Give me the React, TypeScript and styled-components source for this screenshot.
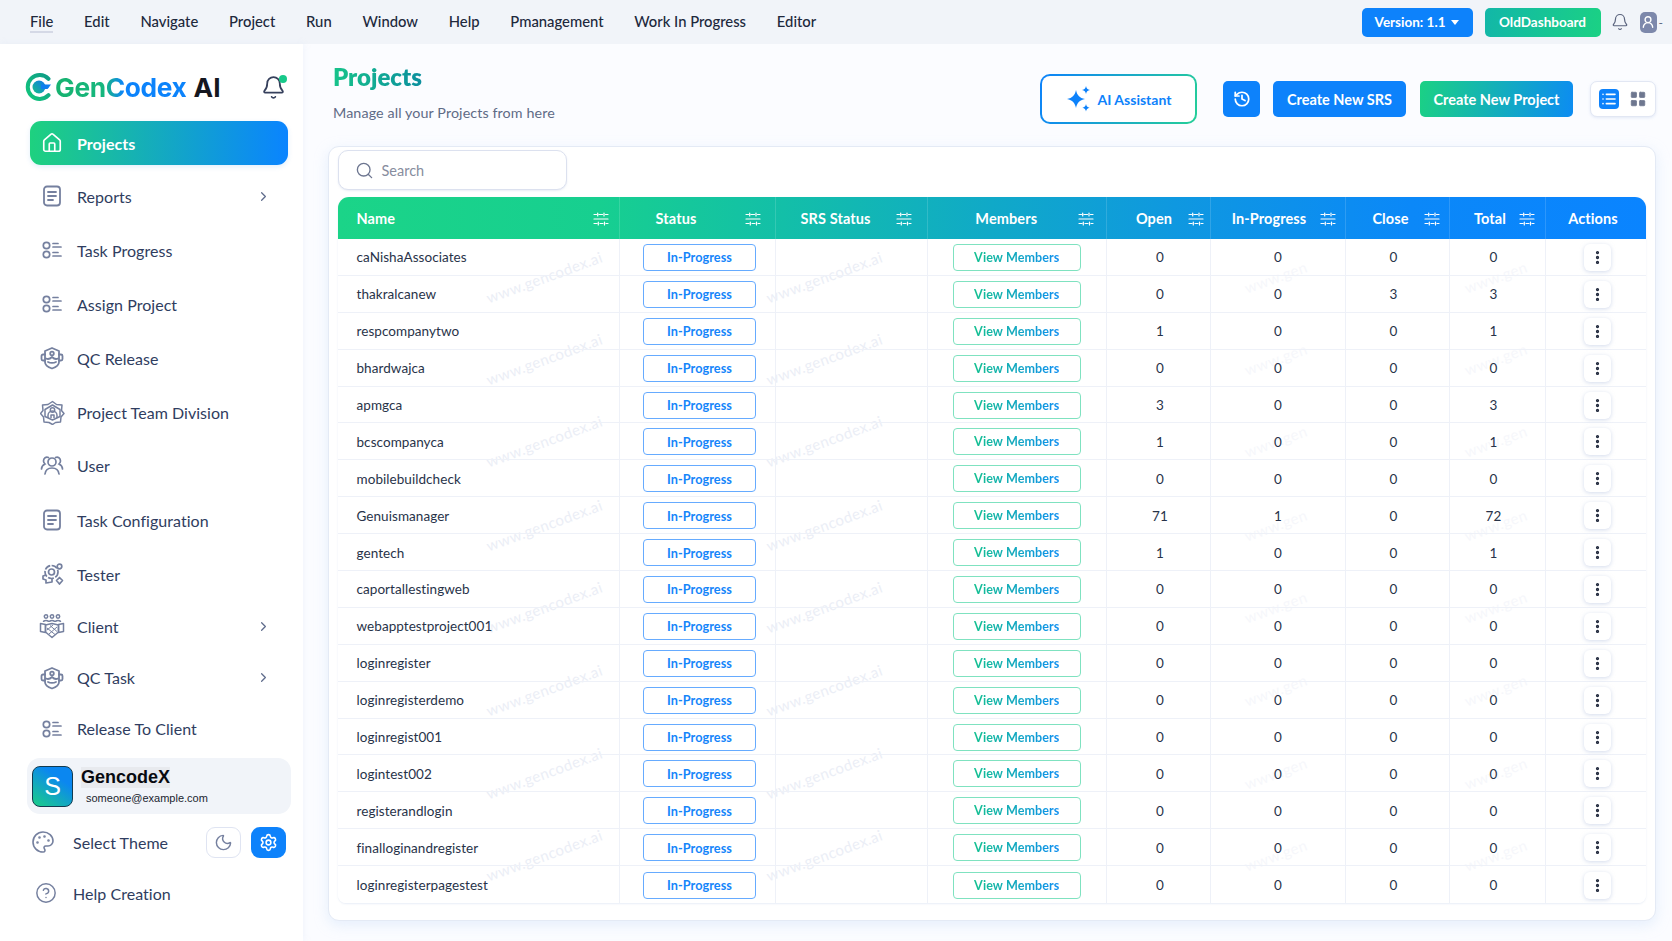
import React from 'react';
import styled, { createGlobalStyle } from 'styled-components';
import {
  Bell, ChevronRight, CircleHelp, EllipsisVertical, History, House, LayoutGrid, List, Moon, Palette, Search, Settings, UserRound,
} from 'lucide-react';

const Global = createGlobalStyle`
  html, body { margin: 0; padding: 0; background: #fff; }
  body { font-family: Lato, "Noto Sans", sans-serif; color: #2c3a5c; }
  * { box-sizing: border-box; }
`;

const Page = styled.div`
  width: 1672px; height: 941px; display: flex; flex-direction: column; overflow: hidden;
`;
const TopBar = styled.header`
  height: 44px; flex: none; background: #f1f4f9; display: flex; align-items: center; padding: 0 9px 0 30px;
`;
const Menu = styled.nav`
  display: flex; align-items: center; gap: 30.8px; flex: 1;
`;
const MenuItem = styled.span<{ $active?: boolean }>`
  font-size: 14.8px; font-weight: 500; color: #20283c; padding-bottom: 1px; line-height: 18px;
  border-bottom: 2px solid ${p => (p.$active ? '#d5d9e6' : 'transparent')};
`;
const TopButton = styled.button<{ $green?: boolean }>`
  height: 29px; border: 0; border-radius: 5px; color: #fff; font: 700 13.5px Lato, sans-serif;
  padding: 0; display: flex; align-items: center; justify-content: center; gap: 6px;
  width: ${p => (p.$green ? '116px' : '111px')}; margin-right: ${p => (p.$green ? '10px' : '12px')};
  background: ${p => (p.$green ? 'linear-gradient(100deg,#12b7a8,#1bd184)' : '#0d82fb')};
`;
const Caret = styled.span`
  width: 0; height: 0; border-left: 4px solid transparent; border-right: 4px solid transparent; border-top: 5px solid #fff;
`;
const AvatarChip = styled.div`
  width: 17px; height: 21px; border-radius: 5px; background: #7d88ab; display: flex; align-items: center; justify-content: center; margin-left: 11px;
`;
const Dash = styled.span`
  font-size: 12px; color: #59627c; margin-left: 2px;
`;
const Body = styled.div`
  flex: 1; display: flex; min-height: 0;
`;
const Sidebar = styled.aside`
  width: 303px; flex: none; background: #fff; padding: 21px 12px 0 25px; box-shadow: 1px 0 6px rgba(210,222,245,.25); position: relative;
`;
const LogoRow = styled.div`
  height: 44px; display: flex; align-items: center; margin-bottom: 12px;
`;
const LogoText = styled.span`
  font: 700 26.3px Inter, sans-serif; letter-spacing: -.35px; margin-left: 2px;
  background: linear-gradient(90deg,#17b26f 0%,#16b77f 38%,#0c83fb 52%,#0c83fb 100%); -webkit-background-clip: text; background-clip: text; color: transparent;
`;
const LogoAi = styled.span`
  font: 700 26.3px Inter, sans-serif; color: #15171f; margin-left: 7px;
`;
const BellWrap = styled.div`
  margin-left: auto; margin-right: 5px; color: #36405c; display: flex; position: relative;
`;
const BellDotMark = styled.span`
  position: absolute; top: 0; right: -1px; width: 8px; height: 8px; border-radius: 50%; background: #18c98a;
`;
const NavList = styled.nav`
  display: flex; flex-direction: column;
`;
const NavRow = styled.div<{ $h: number; $active?: boolean }>`
  height: ${p => p.$h}px; margin-left: 5px; width: 258px; display: flex; align-items: center; padding-left: 9px; padding-right: 17px; border-radius: 11px; color: #2f3d60;
  ${p => (p.$active ? 'background: linear-gradient(90deg,#1ed17f,#0a84ff); color:#fff; box-shadow:0 2px 5px rgba(60,150,230,.15);' : '')}
`;
const NavIcon = styled.span<{ $active?: boolean }>`
  width: 26px; height: 26px; flex: none; display: flex; align-items: center; justify-content: center; color: ${p => (p.$active ? '#fff' : '#75809f')};
`;
const NavLabel = styled.span<{ $active?: boolean }>`
  margin-left: 12px; flex: 1; font-size: 16px; letter-spacing: .04px; font-weight: ${p => (p.$active ? 700 : 400)};
`;
const UserCard = styled.div`
  height: 56px; margin-left: 2px; width: 264px; margin-top: 0; border-radius: 13px; background: #f1f4f9; display: flex; align-items: center; padding-left: 5px;
`;
const Avatar = styled.div`
  width: 41px; height: 41px; border-radius: 8px; border: 1px solid #123b50; background: linear-gradient(35deg,#1bcf86,#0b87f0 70%); color: #fff; display: flex; align-items: center; justify-content: center; font: 400 25px "Liberation Sans", sans-serif;
`;
const UserText = styled.div`
  margin-left: 8px; display: flex; flex-direction: column; gap: 3px; align-items: flex-start;
`;
const UserName = styled.span`
  font: 700 18px/21px "Liberation Sans", sans-serif; color: #080a10; background: #e8eaee;
`;
const UserMail = styled.span`
  font: 400 11px/14px "Liberation Sans", sans-serif; color: #20242f; margin-left: 5px;
`;
const ThemeRow = styled.div`
  height: 48px; margin-top: 4px; display: flex; align-items: center; padding-left: 6px; color: #2f3d60;
`;
const ThemeLabel = styled.span`
  margin-left: 18px; font-size: 16px; letter-spacing: .04px; flex: 1;
`;
const ThemeBtn = styled.span<{ $on?: boolean }>`
  width: 35px; height: 31px; border-radius: 9px; display: flex; align-items: center; justify-content: center; margin-right: ${p => (p.$on ? '5px' : '10px')};
  ${p => (p.$on ? 'background:#0d82fb;color:#fff;' : 'background:#fff;color:#75809f;border:1.5px solid #dfe4f2;')}
`;
const HelpRow = styled.div`
  height: 44px; margin-top: 5px; display: flex; align-items: center; padding-left: 10px; color: #2f3d60;
`;
const HelpIcon = styled.span`
  color: #75809f; display: flex;
`;
const HelpLabel = styled.span`
  margin-left: 16px; font-size: 16px; letter-spacing: .04px;
`;
const Main = styled.main`
  flex: 1; min-width: 0; background: #fbfcff; padding: 20px 16px 0 25px;
`;
const HeadRow = styled.div`
  height: 70px; display: flex; align-items: center;
`;
const TitleBlock = styled.div`
  flex: 1; padding-left: 5px; margin-top: -13px;
`;
const Title = styled.h1`
  margin: 0; font: 800 24px/28px Lato, sans-serif; width: max-content;
  background: linear-gradient(90deg,#17c38a,#0b8f9e); -webkit-background-clip: text; background-clip: text; color: transparent;
`;
const Subtitle = styled.p`
  margin: 13px 0 0; font-size: 14.3px; line-height: 18px; color: #5f6b86; letter-spacing: .1px;
`;
const AiButton = styled.button`
  width: 157px; height: 50px; border-radius: 10px; border: 2px solid transparent; margin-right: 26px; display: flex; align-items: center; justify-content: center; gap: 6px; color: #0d82fb; font: 700 14px Lato, sans-serif;
  background: linear-gradient(#fff,#fff) padding-box, linear-gradient(110deg,#0d82fb,#25cf97) border-box;
`;
const ActionButton = styled.button<{ $w: number; $m: number; $green?: boolean }>`
  width: ${p => p.$w}px; margin-right: ${p => p.$m}px; height: 36px; border: 0; border-radius: 5px; color: #fff; font: 700 14.5px Lato, sans-serif; display: flex; align-items: center; justify-content: center; padding: 0;
  background: ${p => (p.$green ? 'linear-gradient(100deg,#1bd184,#0c8cf2)' : '#0d82fb')};
`;
const Toggle = styled.div`
  width: 66px; height: 36px; border-radius: 7px; border: 1.5px solid #e2e7f3; background: #fff; display: flex; align-items: center; padding-left: 8px; gap: 10px; box-shadow: 0 1px 3px rgba(190,205,235,.4);
`;
const ToggleOn = styled.span`
  width: 20px; height: 20px; background: #0d82fb; border-radius: 4px; display: flex; align-items: center; justify-content: center; color: #fff;
`;
const ToggleOff = styled.span`
  display: flex; color: #6e778f;
`;
const Card = styled.section`
  margin-top: 12px; height: 775px; border: 1.5px solid #e4eaf5; border-radius: 11px; background: #fff; padding: 3px 9.5px 0 8.5px; box-shadow: 0 4px 14px rgba(190,215,245,.35);
`;
const SearchBox = styled.div`
  width: 229px; height: 40px; border: 1.5px solid #dce1ef; border-radius: 10px; background: #fff; display: flex; align-items: center; padding-left: 16px; gap: 8px; color: #6d7690; box-shadow: 0 1px 2px rgba(190,200,225,.35);
`;
const SearchText = styled.span`
  font-size: 14.5px; color: #878d9e;
`;
const Table = styled.div`
  margin-top: 7px; position: relative; border-radius: 11px 11px 8px 8px; overflow: hidden; box-shadow: 0 1px 2px rgba(205,215,235,.45);
`;
const columns = '282px 156px 152px 179.5px 104px 135px 104px 96px 98px';
const HeaderRow = styled.div`
  display: grid; grid-template-columns: ${columns}; height: 42px; background: linear-gradient(90deg,#1bd488 0%,#17cf90 20%,#13bfa8 34%,#10a9c8 50%,#0f98e0 64%,#0b88f8 82%,#0a84ff 100%);
`;
const HeaderCell = styled.div<{ $pad: number; $left?: boolean }>`
  display: flex; align-items: center; color: #fff; font-size: 14.5px; font-weight: 700; letter-spacing: .1px; padding: 1px ${p => p.$pad}px 0 ${p => (p.$left ? 19 : 0)}px; border-right: 1px solid rgba(255,255,255,.14);
  &:last-child { border-right: 0; padding: 1px 4px 0 0; }
`;
const HeaderLabel = styled.span<{ $left?: boolean; $pl?: number; $pr?: number }>`
  flex: 1; white-space: nowrap; text-align: ${p => (p.$left ? 'left' : 'center')}; padding: 0 ${p => p.$pr ?? 0}px 0 ${p => p.$pl ?? 0}px;
`;
const SliderIcon = styled.svg`
  width: 16px; height: 16px; flex: none; margin-left: 6px;
`;
const DataRow = styled.div`
  display: grid; grid-template-columns: ${columns}; height: 36.9px; border-bottom: 1px solid #eef1f8; position: relative;
  &:last-child { border-bottom: 0; }
`;
const Cell = styled.div<{ $left?: boolean; $nudge?: number; $lead?: number }>`
  display: flex; align-items: center; justify-content: ${p => (p.$left ? 'flex-start' : 'center')}; padding: 1px ${p => p.$nudge ?? 0}px 0 ${p => (p.$left ? 19 : p.$lead ?? 0)}px; border-right: 1px solid #eef1f8; font-size: 13.5px; color: #283349; letter-spacing: .06px;
  &:last-child { border-right: 0; }
`;
const StatusPill = styled.span`
  width: 113px; height: 27px; border: 1.5px solid #66abff; border-radius: 4px; display: flex; align-items: center; justify-content: center; color: #1585fa; font-size: 12.7px; font-weight: 700; background: #fff;
`;
const MembersPill = styled.span`
  width: 128px; height: 27px; border: 1.5px solid #7fe2c0; border-radius: 4px; display: flex; align-items: center; justify-content: center; background: #fff;
`;
const MembersText = styled.span`
  font-size: 12.6px; font-weight: 700; background: linear-gradient(90deg,#14c091,#0f8ff0); -webkit-background-clip: text; background-clip: text; color: transparent;
`;
const DotsBtn = styled.span`
  width: 27px; height: 27px; border-radius: 6px; background: #fff; display: flex; align-items: center; justify-content: center; color: #20283c; box-shadow: 0 1px 4px rgba(175,190,220,.55);
`;
const Rows = styled.div`
  position: relative; background: #fff; overflow: hidden;
`;
const MarkLayer = styled.div`
  position: absolute; inset: 0; pointer-events: none;
`;
const Mark = styled.span<{ $x: number; $y: number; $faint?: boolean }>`
  position: absolute; left: ${p => p.$x}px; top: ${p => p.$y}px; transform: rotate(-20deg); font-size: 15px; letter-spacing: .4px; color: ${p => (p.$faint ? '#f6f7fb' : '#ebeef6')}; white-space: nowrap;
`;
const RowCells = styled.div`
  position: relative;
`;

const ListGlyph = () => (
  <svg width="24" height="22" viewBox="0 0 24 22" fill="none" stroke="currentColor" strokeWidth="1.7" strokeLinecap="round">
    <circle cx="6.5" cy="6.5" r="3.2" /><circle cx="6.5" cy="15.5" r="3.2" />
    <path d="M13 4.5h5M13 8h8M13 13.5h5M13 17h8" />
  </svg>
);
const DocGlyph = () => (
  <svg width="20" height="22" viewBox="0 0 20 22" fill="none" stroke="currentColor" strokeWidth="1.8" strokeLinecap="round">
    <rect x="2" y="1.5" width="16" height="19" rx="3" /><path d="M6 7h8M6 11h8M6 15h5" />
  </svg>
);
const BadgeGlyph = () => (
  <svg width="24" height="24" viewBox="0 0 24 24" fill="none" stroke="currentColor" strokeWidth="1.8" strokeLinejoin="round" strokeLinecap="round">
    <path d="M5 5l7-3 7 3v11c0 3-4 5.500-7 6.500-3-1-7-3.500-7-6.500z" />
    <path d="M5 8.500H3a1.500 1.500 0 0 0-1.500 1.500v3A1.500 1.500 0 0 0 3 14.500h2M19 8.500h2a1.500 1.500 0 0 1 1.500 1.500v3a1.500 1.500 0 0 1-1.500 1.500h-2" />
    <circle cx="12" cy="7.500" r="1.800" /><path d="M6 12.500c2 1 4 .5 6-1.500 2 2 4 2.500 6 1.500M8 16c2 1 6 1 8 0" />
  </svg>
);
const TeamGlyph = () => (
  <svg width="25" height="25" viewBox="0 0 25 25" fill="none" stroke="currentColor" strokeWidth="1.5" strokeLinejoin="round">
    <path d="M12.500 1.500l4 3 5.500.5-.5 5.500 2.500 3-3 3.500-.5 5-5 .5-3 2-3.500-2-5-.5-.5-5-3-3.500 2.500-3-.5-5.500 5.500-.5z" />
    <path d="M5 9.500L12.500 5 20 9.500v7L12.500 20 5 16.500z" />
    <circle cx="12.500" cy="10" r="2.200" /><path d="M8 18v-2.500a4.500 4.500 0 0 1 9 0V18M11 18v-3h3v3" />
  </svg>
);
const TesterGlyph = () => (
  <svg width="25" height="25" viewBox="0 0 25 25" fill="none" stroke="currentColor" strokeWidth="1.7" strokeLinejoin="round">
    <circle cx="11.500" cy="10" r="6.500" strokeDasharray="6 1.500" /><circle cx="11.500" cy="10" r="3" />
    <circle cx="19.500" cy="4.500" r="2.300" /><path d="M6 13l-3 1v3l3 1v3l6-1v-4" />
    <path d="M19.500 15.500l3 3-3 3.500-3-3.500z" />
  </svg>
);
const HandsGlyph = () => (
  <svg width="26" height="26" viewBox="0 0 26 26" fill="none" stroke="currentColor" strokeWidth="1.5" strokeLinejoin="round">
    <circle cx="7" cy="3.500" r="1.700" /><circle cx="13" cy="3.500" r="1.700" /><circle cx="19" cy="3.500" r="1.700" />
    <path d="M4.500 9c0-2 5-2 5 0M10.500 9c0-2 5-2 5 0M16.500 9c0-2 5-2 5 0" />
    <path d="M1.500 10.500l5 1v8l-5-1zM24.500 10.500l-5 1v8l5-1z" />
    <path d="M6.500 12l6.500-1.500 6.500 1.500v7L13 24.500 6.500 19z" />
    <path d="M8 15l8 6.500M11 12.500l7 6M18 14l-8 7M14 12l-6 5" strokeWidth="1" />
  </svg>
);
const UsersGlyph = () => (
  <svg width="24" height="22" viewBox="0 0 24 22" fill="none" stroke="currentColor" strokeWidth="1.7" strokeLinecap="round">
    <circle cx="12" cy="7" r="4" />
    <path d="M5 19c.5-4 3.500-6 7-6s6.500 2 7 6M8.500 2.500C6 1.500 3.500 3 3.500 6c0 1.500 1 2.500 1.500 3C3 10 1.500 12 1.500 14M15.500 2.500C18 1.500 20.500 3 20.500 6c0 1.500-1 2.500-1.500 3 2 1 3.500 3 3.500 5" />
  </svg>
);
const LogoMark = () => (
  <svg width="28" height="28" viewBox="0 0 28 28" fill="none">
    <defs>
      <linearGradient id="lgc" x1="0" y1="1" x2="1" y2="0"><stop offset="0" stopColor="#12c77c" /><stop offset="1" stopColor="#0e9c86" /></linearGradient>
      <linearGradient id="lgd" x1="0" y1="1" x2="1" y2="0"><stop offset="0" stopColor="#15bf86" /><stop offset="1" stopColor="#0d78ee" /></linearGradient>
    </defs>
    <path d="M23.500 5.800A12 12 0 1 0 23.500 22.200" stroke="url(#lgc)" strokeWidth="4" strokeLinecap="round" />
    <circle cx="14" cy="14" r="6.500" fill="url(#lgd)" />
    <path d="M16 11.500h10l-1.500 2-1 1.500-1 1h-6.500z" fill="#0d7fef" />
  </svg>
);
const Sliders = () => (
  <SliderIcon viewBox="0 0 16 16" fill="none" stroke="#fff" strokeWidth="1.2" strokeLinecap="round">
    <path d="M1 3.500h2.500M6 3.500h3.500M12.500 3.500H15M4.700 2v3M11 2v3" />
    <path d="M1 8h14" />
    <path d="M1 12.500h3M7 12.500h3M13 12.500h2M5.300 11v3M11.500 11v3" />
  </SliderIcon>
);
const StarsIcon = () => (
  <svg width="26" height="28" viewBox="0 0 26 28" fill="#0d82fb">
    <path d="M10 5c1 5 3.500 8 9 9-5.500 1-8 4-9 9-1-5-3.500-8-9-9 5.500-1 8-4 9-9z" />
    <path d="M20 1c.4 2.500 1.500 3.600 4 4-2.500.4-3.600 1.500-4 4-.4-2.500-1.500-3.600-4-4 2.500-.4 3.600-1.500 4-4z" />
    <path d="M20 19c.4 2.300 1.400 3.300 3.600 3.700-2.200.4-3.200 1.400-3.600 3.700-.4-2.300-1.400-3.300-3.600-3.700 2.200-.4 3.200-1.400 3.600-3.700z" />
  </svg>
);

type Nav = { label: string; h: number; icon: React.ReactNode; more?: boolean; active?: boolean };
const nav: Nav[] = [
  { label: 'Projects', h: 44, icon: <House size={22} strokeWidth={1.8} />, active: true },
  { label: 'Reports', h: 62, icon: <DocGlyph />, more: true },
  { label: 'Task Progress', h: 46, icon: <ListGlyph /> },
  { label: 'Assign Project', h: 62, icon: <ListGlyph /> },
  { label: 'QC Release', h: 46, icon: <BadgeGlyph /> },
  { label: 'Project Team Division', h: 62, icon: <TeamGlyph /> },
  { label: 'User', h: 45, icon: <UsersGlyph /> },
  { label: 'Task Configuration', h: 64, icon: <DocGlyph /> },
  { label: 'Tester', h: 44, icon: <TesterGlyph /> },
  { label: 'Client', h: 60, icon: <HandsGlyph />, more: true },
  { label: 'QC Task', h: 43, icon: <BadgeGlyph />, more: true },
  { label: 'Release To Client', h: 59, icon: <ListGlyph /> },
];

const menu = ['File', 'Edit', 'Navigate', 'Project', 'Run', 'Window', 'Help', 'Pmanagement', 'Work In Progress', 'Editor'];
const heads: { t: string; pad: number; left?: boolean; pl?: number; pr?: number }[] = [
  { t: 'Name', pad: 10, left: true }, { t: 'Status', pad: 14, pr: 6 }, { t: 'SRS Status', pad: 15, pl: 6 }, { t: 'Members', pad: 12, pl: 13 },
  { t: 'Open', pad: 6, pl: 19 }, { t: 'In-Progress', pad: 9, pl: 13 }, { t: 'Close', pad: 9, pl: 17 }, { t: 'Total', pad: 10, pl: 17 }, { t: 'Actions', pad: 0 },
];
const rows: [string, number, number, number, number][] = [
  ['caNishaAssociates', 0, 0, 0, 0], ['thakralcanew', 0, 0, 3, 3], ['respcompanytwo', 1, 0, 0, 1], ['bhardwajca', 0, 0, 0, 0],
  ['apmgca', 3, 0, 0, 3], ['bcscompanyca', 1, 0, 0, 1], ['mobilebuildcheck', 0, 0, 0, 0], ['Genuismanager', 71, 1, 0, 72],
  ['gentech', 1, 0, 0, 1], ['caportallestingweb', 0, 0, 0, 0], ['webapptestproject001', 0, 0, 0, 0], ['loginregister', 0, 0, 0, 0],
  ['loginregisterdemo', 0, 0, 0, 0], ['loginregist001', 0, 0, 0, 0], ['logintest002', 0, 0, 0, 0], ['registerandlogin', 0, 0, 0, 0],
  ['finalloginandregister', 0, 0, 0, 0], ['loginregisterpagestest', 0, 0, 0, 0],
];
const markXs = [145, 425];
const faintXs = [905, 1125];
const markYs = [29, 111, 193, 277, 359, 442, 525, 607];

export default function App() {
  return (
    <Page>
      <Global />
      <TopBar>
        <Menu>
          {menu.map((m, i) => <MenuItem key={m} $active={i === 0}>{m}</MenuItem>)}
        </Menu>
        <TopButton>Version: 1.1 <Caret /></TopButton>
        <TopButton $green>OldDashboard</TopButton>
        <Bell size={18} color="#59627c" strokeWidth={1.6} />
        <AvatarChip><UserRound size={14} color="#fff" strokeWidth={2.4} /></AvatarChip>
        <Dash>-</Dash>
      </TopBar>
      <Body>
        <Sidebar>
          <LogoRow>
            <LogoMark />
            <LogoText>GenCodex</LogoText>
            <LogoAi>AI</LogoAi>
            <BellWrap><Bell size={25} strokeWidth={1.7} /><BellDotMark /></BellWrap>
          </LogoRow>
          <NavList>
            {nav.map(n => (
              <NavRow key={n.label} $h={n.h} $active={n.active}>
                <NavIcon $active={n.active}>{n.icon}</NavIcon>
                <NavLabel $active={n.active}>{n.label}</NavLabel>
                {n.more && <ChevronRight size={15} color="#5f6c8c" strokeWidth={2} />}
              </NavRow>
            ))}
          </NavList>
          <UserCard>
            <Avatar>S</Avatar>
            <UserText>
              <UserName>GencodeX</UserName>
              <UserMail>someone@example.com</UserMail>
            </UserText>
          </UserCard>
          <ThemeRow>
            <HelpIcon><Palette size={24} strokeWidth={1.6} /></HelpIcon>
            <ThemeLabel>Select Theme</ThemeLabel>
            <ThemeBtn><Moon size={19} strokeWidth={1.8} /></ThemeBtn>
            <ThemeBtn $on><Settings size={19} strokeWidth={2} /></ThemeBtn>
          </ThemeRow>
          <HelpRow>
            <HelpIcon><CircleHelp size={22} strokeWidth={1.6} /></HelpIcon>
            <HelpLabel>Help Creation</HelpLabel>
          </HelpRow>
        </Sidebar>
        <Main>
          <HeadRow>
            <TitleBlock>
              <Title>Projects</Title>
              <Subtitle>Manage all your Projects from here</Subtitle>
            </TitleBlock>
            <AiButton><StarsIcon />AI Assistant</AiButton>
            <ActionButton $w={37} $m={13}><History size={18} strokeWidth={2.3} /></ActionButton>
            <ActionButton $w={133} $m={14}>Create New SRS</ActionButton>
            <ActionButton $w={153} $m={17} $green>Create New Project</ActionButton>
            <Toggle>
              <ToggleOn><List size={16} strokeWidth={2.4} /></ToggleOn>
              <ToggleOff><LayoutGrid size={18} fill="currentColor" strokeWidth={1} /></ToggleOff>
            </Toggle>
          </HeadRow>
          <Card>
            <SearchBox>
              <Search size={19} strokeWidth={1.7} />
              <SearchText>Search</SearchText>
            </SearchBox>
            <Table>
              <HeaderRow>
                {heads.map((h, i) => (
                  <HeaderCell key={h.t} $pad={h.pad} $left={h.left}>
                    <HeaderLabel $left={h.left} $pl={h.pl} $pr={h.pr}>{h.t}</HeaderLabel>
                    {i < 8 && <Sliders />}
                  </HeaderCell>
                ))}
              </HeaderRow>
              <Rows>
                <MarkLayer>
                  {markYs.flatMap(y => markXs.map(x => <Mark key={`${x}-${y}`} $x={x} $y={y}>www.gencodex.ai</Mark>))}
                  {markYs.flatMap(y => faintXs.map(x => <Mark key={`${x}-${y}`} $x={x} $y={y} $faint>www.gen</Mark>))}
                </MarkLayer>
                <RowCells>
                  {rows.map(r => (
                    <DataRow key={r[0]}>
                      <Cell $left>{r[0]}</Cell>
                      <Cell $lead={5}><StatusPill>In-Progress</StatusPill></Cell>
                      <Cell />
                      <Cell><MembersPill><MembersText>View Members</MembersText></MembersPill></Cell>
                      <Cell $lead={3}>{r[1]}</Cell>
                      <Cell>{r[2]}</Cell>
                      <Cell $nudge={8}>{r[3]}</Cell>
                      <Cell $nudge={8}>{r[4]}</Cell>
                      <Cell $lead={4}><DotsBtn><EllipsisVertical size={17} strokeWidth={2.6} /></DotsBtn></Cell>
                    </DataRow>
                  ))}
                </RowCells>
              </Rows>
            </Table>
          </Card>
        </Main>
      </Body>
    </Page>
  );
}
